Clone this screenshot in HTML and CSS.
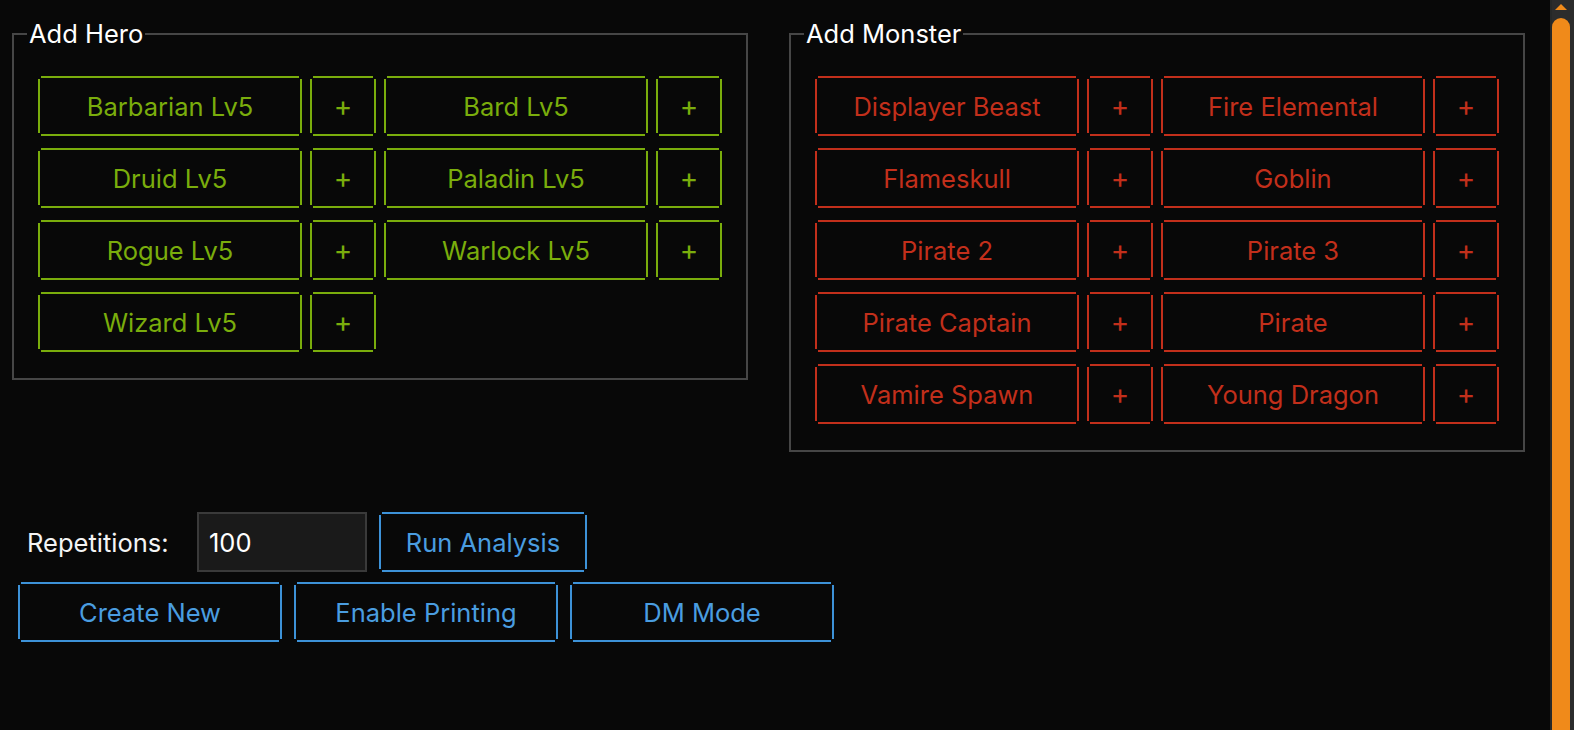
FILE: index.html
```html
<!DOCTYPE html>
<html>
<head>
<meta charset="utf-8">
<link rel="stylesheet" href="styles.css">
</head>
<body>
<div class="app">
  <main class="main">
    <div class="groups">
      <fieldset class="group">
        <legend class="legend">Add Hero</legend>
        <div class="grid">
          <button class="btn hero wide">Barbarian Lv5</button><button class="btn hero plus">+</button>
          <button class="btn hero wide">Bard Lv5</button><button class="btn hero plus">+</button>
          <button class="btn hero wide">Druid Lv5</button><button class="btn hero plus">+</button>
          <button class="btn hero wide">Paladin Lv5</button><button class="btn hero plus">+</button>
          <button class="btn hero wide">Rogue Lv5</button><button class="btn hero plus">+</button>
          <button class="btn hero wide">Warlock Lv5</button><button class="btn hero plus">+</button>
          <button class="btn hero wide">Wizard Lv5</button><button class="btn hero plus">+</button>
        </div>
      </fieldset>
      <fieldset class="group">
        <legend class="legend">Add Monster</legend>
        <div class="grid">
          <button class="btn monster wide">Displayer Beast</button><button class="btn monster plus">+</button>
          <button class="btn monster wide">Fire Elemental</button><button class="btn monster plus">+</button>
          <button class="btn monster wide">Flameskull</button><button class="btn monster plus">+</button>
          <button class="btn monster wide">Goblin</button><button class="btn monster plus">+</button>
          <button class="btn monster wide">Pirate 2</button><button class="btn monster plus">+</button>
          <button class="btn monster wide">Pirate 3</button><button class="btn monster plus">+</button>
          <button class="btn monster wide">Pirate Captain</button><button class="btn monster plus">+</button>
          <button class="btn monster wide">Pirate</button><button class="btn monster plus">+</button>
          <button class="btn monster wide">Vamire Spawn</button><button class="btn monster plus">+</button>
          <button class="btn monster wide">Young Dragon</button><button class="btn monster plus">+</button>
        </div>
      </fieldset>
    </div>
    <div class="controls">
      <div class="row">
        <label class="label">Repetitions:</label>
        <input class="input" type="text" value="100">
        <button class="btn action run">Run Analysis</button>
      </div>
      <div class="row">
        <button class="btn action wide">Create New</button>
        <button class="btn action wide">Enable Printing</button>
        <button class="btn action wide">DM Mode</button>
      </div>
    </div>
  </main>
  <div class="scrollbar">
    <div class="arrow"></div>
    <div class="thumb"></div>
  </div>
</div>
</body>
</html>
```
FILE: styles.css
```css
* { box-sizing: border-box; }
html, body {
  margin: 0;
  padding: 0;
  height: 100%;
  background: #080808;
  overflow: hidden;
}
body {
  font-family: Inter, "Noto Sans", "Liberation Sans", sans-serif;
  color: #f2f2f2;
}
.app {
  display: flex;
  height: 100vh;
}
.main {
  flex: 1;
  padding: 19px 0 0 12px;
}
.groups {
  display: flex;
  align-items: flex-start;
  gap: 41px;
}
.group {
  margin: 0;
  padding: 0;
  width: 736px;
  border: 2px solid #464646;
  min-width: 0;
}
.legend {
  margin-left: 13px;
  padding: 0 2px;
  font-size: 25.5px;
  line-height: 29px;
  color: #ffffff;
}
.grid {
  display: grid;
  grid-template-columns: 264px 66px 264px 66px;
  column-gap: 8px;
  row-gap: 12px;
  padding: 28px 24px 26px 24px;
}
.btn {
  --c: #7aae0a;
  height: 60px;
  border: 0;
  margin: 0;
  padding: 0;
  font-family: inherit;
  font-size: 25.5px;
  color: var(--c);
  background:
    linear-gradient(var(--c), var(--c)) 3px 0 / calc(100% - 6px) 2px no-repeat,
    linear-gradient(var(--c), var(--c)) 3px 100% / calc(100% - 6px) 2px no-repeat,
    linear-gradient(var(--c), var(--c)) 0 3px / 2px calc(100% - 6px) no-repeat,
    linear-gradient(var(--c), var(--c)) 100% 3px / 2px calc(100% - 6px) no-repeat;
  background-color: transparent;
  display: flex;
  align-items: center;
  justify-content: center;
}
.hero { --c: #7aad0c; }
.monster { --c: #c22f1b; }
.action { --c: #3d92d8; color: #4a9de0; }
.plus { font-size: 28px; }
.wide { width: 264px; }
.controls {
  margin-top: 60px;
  padding-left: 6px;
  display: flex;
  flex-direction: column;
  gap: 10px;
}
.row {
  display: flex;
  align-items: center;
  gap: 12px;
}
.label {
  width: 167px;
  padding-left: 9px;
  font-size: 25.5px;
  color: #f4f4f4;
}
.input {
  width: 170px;
  height: 60px;
  background: #1a1a1a;
  border: 2px solid #3a3a3a;
  color: #ffffff;
  font-family: inherit;
  font-size: 25.5px;
  padding: 0 0 0 10px;
  outline: none;
}
.run { width: 208px; }
.scrollbar {
  width: 24px;
  height: 100%;
  background: #2c2c2c;
  border-left: 2px solid #262828;
  padding-right: 4px;
  display: flex;
  flex-direction: column;
}
.arrow {
  height: 18px;
  display: flex;
  justify-content: center;
  padding-top: 4px;
}
.arrow::before {
  content: "";
  width: 0;
  height: 0;
  border-left: 6px solid transparent;
  border-right: 6px solid transparent;
  border-bottom: 6px solid #f08a1a;
}
.thumb {
  flex: 1;
  background: #f08a1a;
  border-radius: 9px 9px 0 0;
}
```
